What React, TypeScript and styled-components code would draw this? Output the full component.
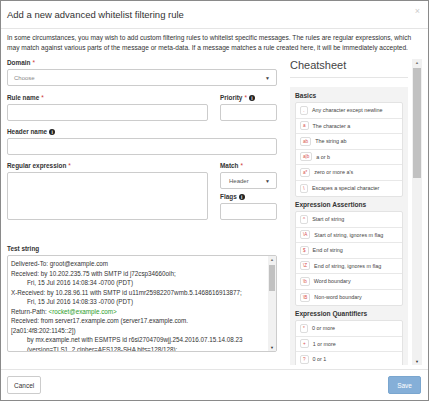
import React from "react";
import styled, { createGlobalStyle } from "styled-components";

const G = createGlobalStyle`
  html,body{margin:0;padding:0;background:#fff;}
  body{font-family:"Liberation Sans",Arial,sans-serif;color:#333;}
  *{box-sizing:border-box;}
`;
const Modal = styled.div`
  width:429px;height:401px;border:1px solid #8a8a8a;display:flex;flex-direction:column;overflow:hidden;
`;
const Header = styled.div`
  height:28px;border-bottom:1px solid #e5e5e5;display:flex;align-items:center;justify-content:space-between;padding:0 8px 0 6px;
`;
const Title = styled.div`font-size:9.5px;color:#333;`;
const Close = styled.div`font-size:9px;color:#ccc;margin-top:-8px;`;
const Body = styled.div`flex:1;padding:4px 6px 0 6px;display:flex;flex-direction:column;min-height:0;`;
const Intro = styled.p`margin:0 0 7px;font-size:6.6px;line-height:9.5px;color:#333;`;
const Cols = styled.div`display:flex;gap:13px;flex:1;min-height:0;`;
const Left = styled.div`width:273px;display:flex;flex-direction:column;`;
const Row = styled.div`display:flex;justify-content:space-between;`;
const Field = styled.div<{ w?: number; mb?: number }>`
  width:${p => (p.w ? p.w + "px" : "100%")};display:flex;flex-direction:column;margin-bottom:${p => p.mb ?? 7}px;
`;
const Label = styled.label`font-size:6.4px;font-weight:bold;color:#333;margin-bottom:3px;display:flex;align-items:center;gap:2px;`;
const Req = styled.span`color:#c33;font-weight:normal;`;
const Info = styled.span`
  display:inline-flex;width:6px;height:6px;border-radius:50%;background:#222;color:#fff;font-size:5px;font-weight:bold;align-items:center;justify-content:center;
`;
const Box = styled.div<{ h: number }>`
  height:${p => p.h}px;border:1px solid #ccc;border-radius:2px;background:#fff;display:flex;align-items:center;padding:0 6px;font-size:6px;color:#888;justify-content:space-between;
`;
const Caret = styled.span`font-size:5px;color:#444;`;
const Test = styled.div`height:97px;border:1px solid #ccc;border-radius:2px;display:flex;overflow:hidden;`;
const Lines = styled.div`flex:1;padding:3px 2px 0 3px;font-size:6.3px;line-height:9.5px;color:#333;white-space:nowrap;overflow:hidden;`;
const Ind = styled.div`padding-left:16px;`;
const Green = styled.span`color:#2a9d2a;`;
const SBar = styled.div<{ w: number }>`
  width:${p => p.w}px;background:#f1f1f1;position:relative;flex-shrink:0;
  &::before{content:"▲";position:absolute;top:1px;left:0;right:0;text-align:center;font-size:4px;color:#777;}
  &::after{content:"▼";position:absolute;bottom:1px;left:0;right:0;text-align:center;font-size:4px;color:#333;}
`;
const Thumb = styled.div<{ top: number; h: number }>`
  position:absolute;left:1px;right:1px;top:${p => p.top}px;height:${p => p.h}px;background:#c1c1c1;
`;
const Right = styled.div`flex:1;display:flex;min-height:0;margin-bottom:4px;`;
const Sheet = styled.div`width:118px;display:flex;flex-direction:column;overflow:hidden;`;
const SheetTitle = styled.div`font-size:11px;line-height:13px;color:#444;padding:0 0 5px;border-bottom:1px solid #e5e5e5;margin-bottom:9px;flex-shrink:0;`;
const Panel = styled.div`background:#f3f3f3;padding:3px 5px;`;
const SecTitle = styled.div`font-size:6.6px;font-weight:bold;color:#333;margin:2px 0 3px;`;
const List = styled.div`background:#fff;border:1px solid #e3e3e3;border-radius:2px;margin-bottom:4px;`;
const Item = styled.div`height:15.5px;display:flex;align-items:center;gap:4px;padding:0 4px;border-bottom:1px solid #e8e8e8;font-size:5.4px;color:#444;&:last-child{border-bottom:none;}`;
const Code = styled.span`border:1px solid #ddd;border-radius:2px;color:#d9534f;font-size:4.6px;padding:1px 2px;min-width:8px;text-align:center;background:#fff;`;
const Spacer = styled.div`width:4px;`;
const Footer = styled.div`height:31px;border-top:1px solid #e5e5e5;display:flex;justify-content:space-between;align-items:center;padding:0 7px 0 6px;`;
const Btn = styled.button<{ primary?: boolean }>`
  height:18px;font-family:inherit;font-size:6.5px;border-radius:2px;padding:0 ${p => (p.primary ? 8 : 6)}px;
  border:1px solid ${p => (p.primary ? "#7aa6cf" : "#ccc")};background:${p => (p.primary ? "#85afd8" : "#fff")};color:${p => (p.primary ? "#fff" : "#333")};
`;

const sections: [string, [string, string][]][] = [
  ["Basics", [[".", "Any character except newline"], ["a", "The character a"], ["ab", "The string ab"], ["a|b", "a or b"], ["a*", "zero or more a's"], ["\\", "Escapes a special character"]]],
  ["Expression Assertions", [["^", "Start of string"], ["\\A", "Start of string, ignores m flag"], ["$", "End of string"], ["\\Z", "End of string, ignores m flag"], ["\\b", "Word boundary"], ["\\B", "Non-word boundary"]]],
  ["Expression Quantifiers", [["*", "0 or more"], ["+", "1 or more"], ["?", "0 or 1"], ["{2}", "Exactly 2"], ["{2,5}", "Between 2 and 5"]]],
];

export default function App() {
  return (
    <Modal>
      <G />
      <Header><Title>Add a new advanced whitelist filtering rule</Title><Close>×</Close></Header>
      <Body>
        <Intro>In some circumstances, you may wish to add custom filtering rules to whitelist specific messages. The rules are regular expressions, which may match against various parts of the message or meta-data. If a message matches a rule created here, it will be immediately accepted.</Intro>
        <Cols>
          <Left>
            <Field mb={8}><Label>Domain <Req>*</Req></Label><Box h={17}>Choose<Caret>▼</Caret></Box></Field>
            <Row>
              <Field w={201}><Label>Rule name <Req>*</Req></Label><Box h={17} /></Field>
              <Field w={57}><Label>Priority <Req>*</Req><Info>i</Info></Label><Box h={17} /></Field>
            </Row>
            <Field><Label>Header name <Info>i</Info></Label><Box h={17} /></Field>
            <Row>
              <Field w={201}><Label>Regular expression <Req>*</Req></Label><Box h={48} /></Field>
              <Field w={57} mb={0}>
                <Label>Match <Req>*</Req></Label><Box h={17} style={{ color: "#555", paddingLeft: 8 }}>Header<Caret>▼</Caret></Box>
                <Label style={{ marginTop: 4 }}>Flags <Info>i</Info></Label><Box h={17} />
              </Field>
            </Row>
            <Field style={{ marginTop: 18 }}>
              <Label>Test string</Label>
              <Test>
                <Lines>
                  <div>Delivered-To: groot@example.com</div>
                  <div>Received: by 10.202.235.75 with SMTP id j72csp34660oih;</div>
                  <Ind>Fri, 15 Jul 2016 14:08:34 -0700 (PDT)</Ind>
                  <div>X-Received: by 10.28.96.11 with SMTP id u11mr25982207wmb.5.1468616913877;</div>
                  <Ind>Fri, 15 Jul 2016 14:08:33 -0700 (PDT)</Ind>
                  <div>Return-Path: <Green>&lt;rocket@example.com&gt;</Green></div>
                  <div>Received: from server17.example.com (server17.example.com.</div>
                  <div>[2a01:4f8:202:1145::2])</div>
                  <Ind>by mx.example.net with ESMTPS id r6si2704709wjj.254.2016.07.15.14.08.23</Ind>
                  <Ind>(version=TLS1_2 cipher=AES128-SHA bits=128/128);</Ind>
                  <Ind>Fri, 15 Jul 2016 14:08:33 -0700 (PDT)</Ind>
                </Lines>
                <SBar w={8}><Thumb top={9} h={26} /></SBar>
              </Test>
            </Field>
          </Left>
          <Right>
            <Sheet>
              <SheetTitle>Cheatsheet</SheetTitle>
              <Panel>
                {sections.map(([t, items]) => (
                  <div key={t}>
                    <SecTitle>{t}</SecTitle>
                    <List>{items.map(([c, d]) => <Item key={c}><Code>{c}</Code>{d}</Item>)}</List>
                  </div>
                ))}
              </Panel>
            </Sheet>
            <Spacer />
            <SBar w={10}><Thumb top={9} h={110} /></SBar>
          </Right>
        </Cols>
      </Body>
      <Footer><Btn>Cancel</Btn><Btn primary>Save</Btn></Footer>
    </Modal>
  );
}
